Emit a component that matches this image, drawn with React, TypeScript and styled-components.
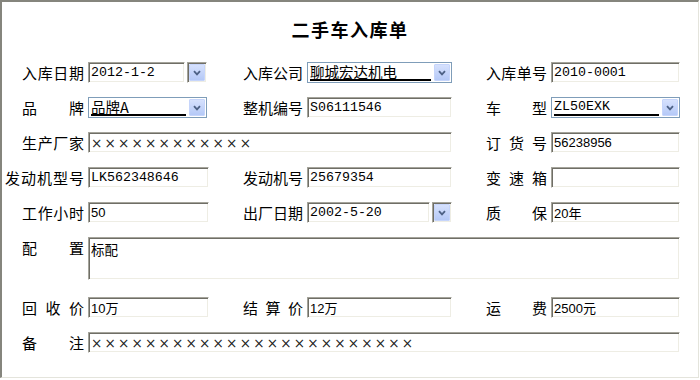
import React from 'react';
import styled, { createGlobalStyle, css } from 'styled-components';

const GlobalStyle = createGlobalStyle`
  html, body {
    margin: 0;
    padding: 0;
    background: #fff;
  }
  body {
    font-family: "Noto Sans CJK SC", "Liberation Sans", sans-serif;
    color: #000;
  }
`;

type FontKind = 'mono' | 'sans' | 'han' | 'cross';

const fontOf = (kind: FontKind = 'mono') => {
  if (kind === 'sans') {
    return css`
      font-family: "Liberation Sans", "Noto Sans CJK SC", sans-serif;
      font-size: 13px;
    `;
  }
  if (kind === 'han') {
    return css`
      font-family: "Noto Sans CJK SC", "Liberation Mono", sans-serif;
      font-size: 14.5px;
    `;
  }
  if (kind === 'cross') {
    return css`
      font-family: "DejaVu Sans", sans-serif;
      font-size: 13.5px;
      letter-spacing: 2.2px;
      color: #222;
    `;
  }
  return css`
    font-family: "Liberation Mono", "Noto Sans CJK SC", monospace;
    font-size: 13.3px;
  `;
};

const sunken = css`
  border: 1px solid;
  border-color: #a5a49b #fff #fff #a5a49b;
  box-shadow: inset 1px 1px 0 #6f6e66, inset -1px -1px 0 #eeede4;
`;

const Window = styled.div`
  box-sizing: border-box;
  width: 699px;
  height: 378px;
  border-style: solid;
  border-width: 2px 1px 1px 2px;
  border-color: #85857d #e4e4dc #e4e4dc #85857d;
  background: #fff;
  padding-top: 15px;
`;

const Title = styled.div`
  height: 24px;
  line-height: 24px;
  text-align: center;
  font-size: 18px;
  font-weight: bold;
  letter-spacing: 1.5px;
`;

const Grid = styled.div`
  margin-top: 21px;
  padding-left: 20px;
  display: grid;
  grid-template-columns: 187px 209px 194px;
  grid-template-rows: repeat(5, 21px) 46px 21px 21px;
  column-gap: 34px;
  row-gap: 14px;
`;

const Cell = styled.div<{ $span?: number; $top?: boolean }>`
  display: flex;
  align-items: ${p => (p.$top ? 'flex-start' : 'center')};
  gap: 4px;
  min-width: 0;
  grid-column: span ${p => p.$span ?? 1};
`;

const LabelBox = styled.div<{ $w: number; $pull?: number }>`
  flex: none;
  width: ${p => p.$w}px;
  margin-left: ${p => -(p.$pull ?? 0)}px;
  display: flex;
  justify-content: space-between;
  font-size: 15px;
  line-height: 21px;
  white-space: nowrap;
`;

const Input = styled.input<{ $font?: FontKind; $w?: number }>`
  box-sizing: border-box;
  height: 21px;
  margin: 0;
  padding: 0 2px;
  min-width: 0;
  flex: ${p => (p.$w ? 'none' : '1')};
  width: ${p => (p.$w ? `${p.$w}px` : 'auto')};
  ${sunken};
  background: #fff;
  color: #000;
  outline: none;
  ${p => fontOf(p.$font)};
`;

const TextArea = styled.textarea`
  box-sizing: border-box;
  flex: 1;
  height: 43px;
  margin: 0;
  padding: 1px 2px;
  resize: none;
  ${sunken};
  background: #fff;
  color: #000;
  outline: none;
  ${fontOf('sans')};
  font-size: 13.5px;
`;

const Combo = styled.div<{ $w?: number }>`
  box-sizing: border-box;
  height: 21px;
  flex: ${p => (p.$w ? 'none' : '1')};
  width: ${p => (p.$w ? `${p.$w}px` : 'auto')};
  display: flex;
  padding: 1px;
  border: 1px solid #7f9db9;
  background: #fff;
`;

const ComboText = styled.div<{ $font?: FontKind }>`
  flex: 1;
  margin: 0 3px 0 1px;
  border-bottom: 2px solid #000;
  line-height: 15px;
  white-space: nowrap;
  ${p => fontOf(p.$font)};
`;

const DateField = styled.div<{ $w?: number }>`
  display: flex;
  gap: 2px;
  flex: ${p => (p.$w ? 'none' : '1')};
  width: ${p => (p.$w ? `${p.$w}px` : 'auto')};
  min-width: 0;
`;

const Well = styled.div`
  box-sizing: border-box;
  flex: none;
  width: 20px;
  height: 21px;
  padding: 1px;
  display: flex;
  ${sunken};
`;

const DropButton = styled.div`
  box-sizing: border-box;
  flex: none;
  width: 16px;
  height: 17px;
  display: flex;
  align-items: center;
  justify-content: center;
  border: 1px solid #c6d5fb;
  border-radius: 1px;
  background: linear-gradient(#d6e1fd, #b5c9f7);
`;

const Chevron = () => (
  <svg width="8" height="6" viewBox="0 0 8 6">
    <path d="M1 1.2 L4 4.4 L7 1.2" stroke="#4d6185" strokeWidth="1.8" fill="none" />
  </svg>
);

const Label: React.FC<{ text: string; w: number; pull?: number }> = ({ text, w, pull }) => (
  <LabelBox $w={w} $pull={pull}>
    {[...text].map((c, i) => (
      <span key={i}>{c}</span>
    ))}
  </LabelBox>
);

const Drop = () => (
  <DropButton>
    <Chevron />
  </DropButton>
);

const crosses = (n: number) => '×'.repeat(n);

export default function App() {
  return (
    <>
      <GlobalStyle />
      <Window>
        <Title>二手车入库单</Title>
        <Grid>
          <Cell>
            <Label text="入库日期" w={62} />
            <DateField $w={119}>
              <Input readOnly value="2012-1-2" />
              <Well>
                <Drop />
              </Well>
            </DateField>
          </Cell>
          <Cell>
            <Label text="入库公司" w={60} />
            <Combo>
              <ComboText $font="han">聊城宏达机电</ComboText>
              <Drop />
            </Combo>
          </Cell>
          <Cell>
            <Label text="入库单号" w={61} />
            <Input readOnly value="2010-0001" />
          </Cell>

          <Cell>
            <Label text="品牌" w={62} />
            <Combo $w={119}>
              <ComboText $font="han">品牌A</ComboText>
              <Drop />
            </Combo>
          </Cell>
          <Cell>
            <Label text="整机编号" w={60} />
            <Input readOnly value="S06111546" />
          </Cell>
          <Cell>
            <Label text="车型" w={61} />
            <Combo>
              <ComboText>ZL50EXK</ComboText>
              <Drop />
            </Combo>
          </Cell>

          <Cell $span={2}>
            <Label text="生产厂家" w={62} />
            <Input readOnly $font="cross" value={crosses(12)} />
          </Cell>
          <Cell>
            <Label text="订货号" w={61} />
            <Input readOnly $font="sans" value="56238956" />
          </Cell>

          <Cell>
            <Label text="发动机型号" w={79} pull={17} />
            <Input readOnly value="LK562348646" />
          </Cell>
          <Cell>
            <Label text="发动机号" w={60} />
            <Input readOnly value="25679354" />
          </Cell>
          <Cell>
            <Label text="变速箱" w={61} />
            <Input readOnly value="" />
          </Cell>

          <Cell>
            <Label text="工作小时" w={62} />
            <Input readOnly $font="sans" value="50" />
          </Cell>
          <Cell>
            <Label text="出厂日期" w={60} />
            <DateField>
              <Input readOnly value="2002-5-20" />
              <Well>
                <Drop />
              </Well>
            </DateField>
          </Cell>
          <Cell>
            <Label text="质保" w={61} />
            <Input readOnly $font="sans" value="20年" />
          </Cell>

          <Cell $span={3} $top>
            <Label text="配置" w={62} />
            <TextArea readOnly value="标配" />
          </Cell>

          <Cell>
            <Label text="回收价" w={62} />
            <Input readOnly $font="sans" value="10万" />
          </Cell>
          <Cell>
            <Label text="结算价" w={60} />
            <Input readOnly $font="sans" value="12万" />
          </Cell>
          <Cell>
            <Label text="运费" w={61} />
            <Input readOnly $font="sans" value="2500元" />
          </Cell>

          <Cell $span={3}>
            <Label text="备注" w={62} />
            <Input readOnly $font="cross" value={crosses(24)} />
          </Cell>
        </Grid>
      </Window>
    </>
  );
}
